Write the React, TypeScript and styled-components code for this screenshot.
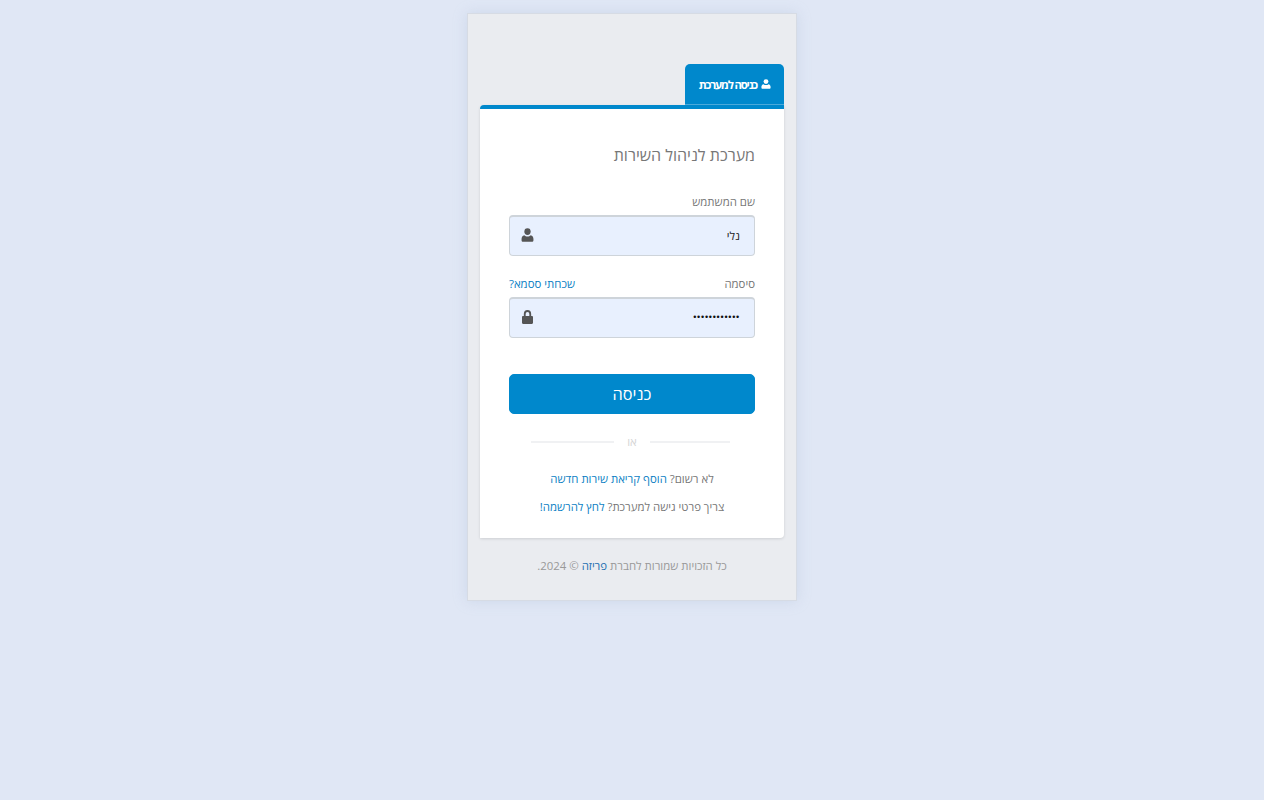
import React from "react";
import styled, { createGlobalStyle } from "styled-components";

const Global = createGlobalStyle`
  html, body { margin: 0; padding: 0; }
  body { background: #e0e7f5; font-family: "Open Sans", "Noto Sans", "Liberation Sans", sans-serif; direction: rtl; min-height: 800px; }
`;
const Page = styled.div`
  display: flex;
  justify-content: center;
  padding-top: 13px;
`;
const Panel = styled.div`
  width: 330px;
  height: 588px;
  box-sizing: border-box;
  background: #eaecf0;
  border: 1px solid #d6dbe4;
  box-shadow: 0 0 12px rgba(170, 185, 215, 0.35);
  padding: 50px 12px 0;
`;
const Tabs = styled.div`
  display: flex;
  justify-content: flex-start;
  height: 41px;
`;
const Tab = styled.div`
  width: 99px;
  height: 41px;
  box-sizing: border-box;
  background: #0088cc;
  border-bottom: 1px solid #4ba9da;
  border-radius: 5px 5px 0 0;
  color: #fff;
  font-size: 11.4px;
  font-weight: 700;
  letter-spacing: -1.2px;
  display: flex;
  align-items: center;
  gap: 4px;
  padding: 0 13px 0 0;
  white-space: nowrap;
`;
const Card = styled.div`
  background: #fff;
  border-top: 4px solid #0088cc;
  border-radius: 4px 0 4px 0;
  box-shadow: 0 1px 3px rgba(0, 0, 0, 0.12);
  height: 433px;
  box-sizing: border-box;
  padding: 34px 29px 0;
`;
const Title = styled.h1`
  margin: 0;
  font-size: 16px;
  font-weight: 400;
  line-height: 24px;
  color: #777;
`;
const LabelRow = styled.div<{ $top: number }>`
  display: flex;
  justify-content: space-between;
  margin-top: ${(p) => p.$top}px;
  height: 17px;
  line-height: 17px;
  font-size: 11.4px;
`;
const Label = styled.label`
  color: #777;
`;
const TextLink = styled.a`
  color: #0d7fc4;
  text-decoration: none;
`;
const Field = styled.div`
  margin-top: 5px;
  height: 41px;
  box-sizing: border-box;
  background: #e8f0fe;
  border: 1px solid #ced4da;
  border-top: 2px solid #ced4da;
  border-radius: 4px;
  display: flex;
  align-items: center;
  justify-content: space-between;
  padding: 0 14px 2px 11px;
  color: #222;
  font-size: 11.4px;
`;
const IconSlot = styled.span<{ $inset?: number }>`
  display: flex;
  color: #555;
  margin-left: ${(p) => p.$inset ?? 0}px;
`;
const Dots = styled.span`
  font-family: "Liberation Sans", sans-serif;
  font-size: 9px;
  letter-spacing: 0.75px;
  color: #111;
`;
const Submit = styled.button`
  display: block;
  width: 100%;
  height: 40px;
  margin-top: 36px;
  background: #0088cc;
  border: 1px solid #0088cc;
  border-radius: 5px;
  color: #fff;
  font-family: inherit;
  font-size: 16.3px;
  padding: 0;
`;
const Divider = styled.div`
  display: flex;
  align-items: center;
  justify-content: space-between;
  margin: 19px 25px 0 22px;
  height: 17px;
  color: #d5d5d5;
  font-size: 11.4px;
  line-height: 15px;
`;
const Line = styled.span<{ $width: number }>`
  width: ${(p) => p.$width}px;
  height: 2px;
  background: #f0f1f3;
`;
const Note = styled.p<{ $top: number }>`
  margin: ${(p) => p.$top}px 0 0;
  text-align: center;
  font-size: 11.4px;
  line-height: 17px;
  color: #777;
`;
const Footer = styled.p`
  margin: 19px 0 0;
  text-align: center;
  font-size: 11.4px;
  line-height: 17px;
  color: #999;
`;
const Brand = styled.a`
  color: #1f6fb0;
  text-decoration: none;
`;

const UserIcon = ({ width, height }: { width: number; height: number }) => (
  <svg width={width} height={height} viewBox="0 0 14 14" fill="currentColor" preserveAspectRatio="none">
    <circle cx="7" cy="3.6" r="3.4" />
    <path d="M3.6 7.2C1.6 7.6.6 9 .6 11v1.2c0 .9.7 1.6 1.6 1.6h9.6c.9 0 1.6-.7 1.6-1.6V11c0-2-1-3.4-3-3.8C9.600 8 8.400 8.500 7 8.500S4.400 8 3.600 7.200z" />
  </svg>
);
const LockIcon = () => (
  <svg width="11" height="14" viewBox="0 0 12 14" fill="currentColor" preserveAspectRatio="none">
    <path d="M2 6V4a4 4 0 0 1 8 0v2h.8c.7 0 1.200.5 1.200 1.200v5.600c0 .7-.5 1.200-1.200 1.200H1.200C.5 14 0 13.500 0 12.800V7.200C0 6.500.5 6 1.200 6H2zm2 0h4V4a2 2 0 0 0-4 0v2z" />
  </svg>
);

export default function App() {
  return (
    <Page>
      <Global />
      <Panel>
        <Tabs>
          <Tab>
            <UserIcon width={10} height={10} />
            <span>כניסה למערכת</span>
          </Tab>
        </Tabs>
        <Card>
          <Title>מערכת לניהול השירות</Title>
          <LabelRow $top={26}>
            <Label>שם המשתמש</Label>
          </LabelRow>
          <Field>
            <span>נלי</span>
            <IconSlot><UserIcon width={13} height={14} /></IconSlot>
          </Field>
          <LabelRow $top={19}>
            <Label>סיסמה</Label>
            <TextLink href="#">שכחתי ססמא?</TextLink>
          </LabelRow>
          <Field>
            <Dots>••••••••••••</Dots>
            <IconSlot $inset={1}><LockIcon /></IconSlot>
          </Field>
          <Submit>כניסה</Submit>
          <Divider>
            <Line $width={80} />
            <span>או</span>
            <Line $width={83} />
          </Divider>
          <Note $top={20}>
            לא רשום? <TextLink href="#">הוסף קריאת שירות חדשה</TextLink>
          </Note>
          <Note $top={11}>
            צריך פרטי גישה למערכת? <TextLink href="#">לחץ להרשמה!</TextLink>
          </Note>
        </Card>
        <Footer>
          כל הזכויות שמורות לחברת <Brand href="#">פריזה</Brand> © 2024.
        </Footer>
      </Panel>
    </Page>
  );
}
